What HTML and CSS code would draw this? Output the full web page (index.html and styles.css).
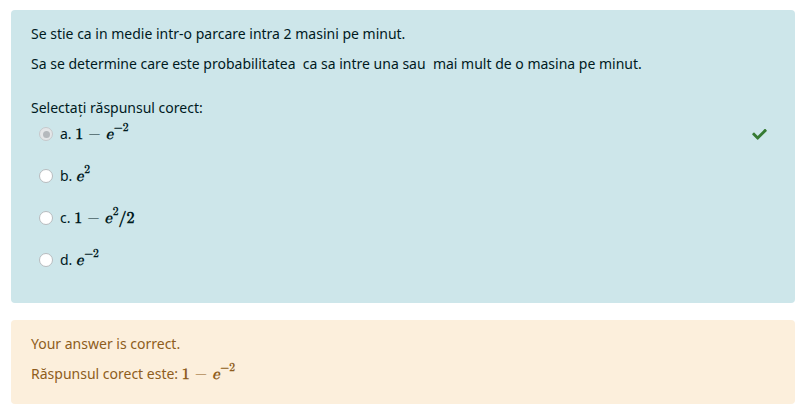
FILE: index.html
```html
<!DOCTYPE html>
<html lang="ro">
<head>
<meta charset="utf-8">
<link rel="stylesheet" href="styles.css">
</head>
<body>
<div class="formulation">
  <p class="qtext">Se stie ca in medie intr-o parcare intra 2 masini pe minut.</p>
  <p class="qtext">Sa se determine care este probabilitatea&nbsp; ca sa intre una sau&nbsp; mai mult de o masina pe minut.</p>
  <div class="prompt">Selectați răspunsul corect:</div>
  <div class="answers">
    <div class="answer">
      <span class="radio checked"></span>
      <span class="label">a. <span class="math"><span class="mn">1</span><span class="mo">−</span><span class="mi">e</span><sup>−2</sup></span></span>
      <svg class="tick" viewBox="0 0 512 420" width="15" height="12"><path fill="#357a32" d="M173.9 405.4l-166.4-166.4c-10-10-10-26.2 0-36.2l36.2-36.2c10-10 26.2-10 36.2 0L192 278.7 432.1 38.6c10-10 26.2-10 36.2 0l36.2 36.2c10 10 10 26.2 0 36.2l-294.4 294.4c-10 10-26.2 10-36.2 0z"/></svg>
    </div>
    <div class="answer">
      <span class="radio"></span>
      <span class="label">b. <span class="math"><span class="mi">e</span><sup>2</sup></span></span>
    </div>
    <div class="answer">
      <span class="radio"></span>
      <span class="label">c. <span class="math"><span class="mn">1</span><span class="mo">−</span><span class="mi">e</span><sup>2</sup><span class="mn">/2</span></span></span>
    </div>
    <div class="answer">
      <span class="radio"></span>
      <span class="label">d. <span class="math"><span class="mi">e</span><sup>−2</sup></span></span>
    </div>
  </div>
</div>
<div class="outcome">
  <p class="fb">Your answer is correct.</p>
  <p class="fb">Răspunsul corect este: <span class="math"><span class="mn">1</span><span class="mo">−</span><span class="mi">e</span><sup>−2</sup></span></p>
</div>
</body>
</html>
```
FILE: styles.css
```css
body {
  margin: 10px 11px;
  font-family: "Noto Sans", "Open Sans", sans-serif;
  font-size: 14px;
  line-height: 1.5;
  background: #fff;
}
.formulation {
  background: #cde6ea;
  color: #001a1e;
  border-radius: 4px;
  padding: 13px 20px 22px;
}
.qtext {
  margin: 0 0 9px;
}
.prompt {
  margin-top: 23px;
}
.answers {
  display: flex;
  flex-direction: column;
}
.answer {
  display: flex;
  align-items: center;
  height: 42px;
  padding-left: 8px;
}
.answer:first-child {
  margin-top: -5px;
}
.radio {
  width: 12px;
  height: 12px;
  border-radius: 50%;
  background: #fff;
  border: 1px solid #b8bcbf;
  margin-right: 7px;
  display: flex;
  align-items: center;
  justify-content: center;
}
.radio.checked {
  background: #e4e6e8;
  border-color: #c6c9cc;
}
.radio.checked::after {
  content: "";
  width: 7px;
  height: 7px;
  border-radius: 50%;
  background: #b5b9bd;
}
.label {
  flex: 1;
}
.tick {
  margin-right: 8px;
}
.math {
  font-family: "Latin Modern Math", "DejaVu Serif", serif;
  font-weight: bold;
  font-size: 16px;
}
.math .mi {
  font-style: italic;
}
.math .mo {
  margin: 0 5px;
  font-weight: normal;
}
.math sup {
  font-size: 11.5px;
  vertical-align: 8px;
  line-height: 0;
  margin-left: 1px;
}
.outcome {
  margin-top: 17px;
  background: #fcefdc;
  color: #8e5d20;
  border-radius: 4px;
  padding: 13px 20px 10px;
}
.fb {
  margin: 0 0 8px;
}
```
